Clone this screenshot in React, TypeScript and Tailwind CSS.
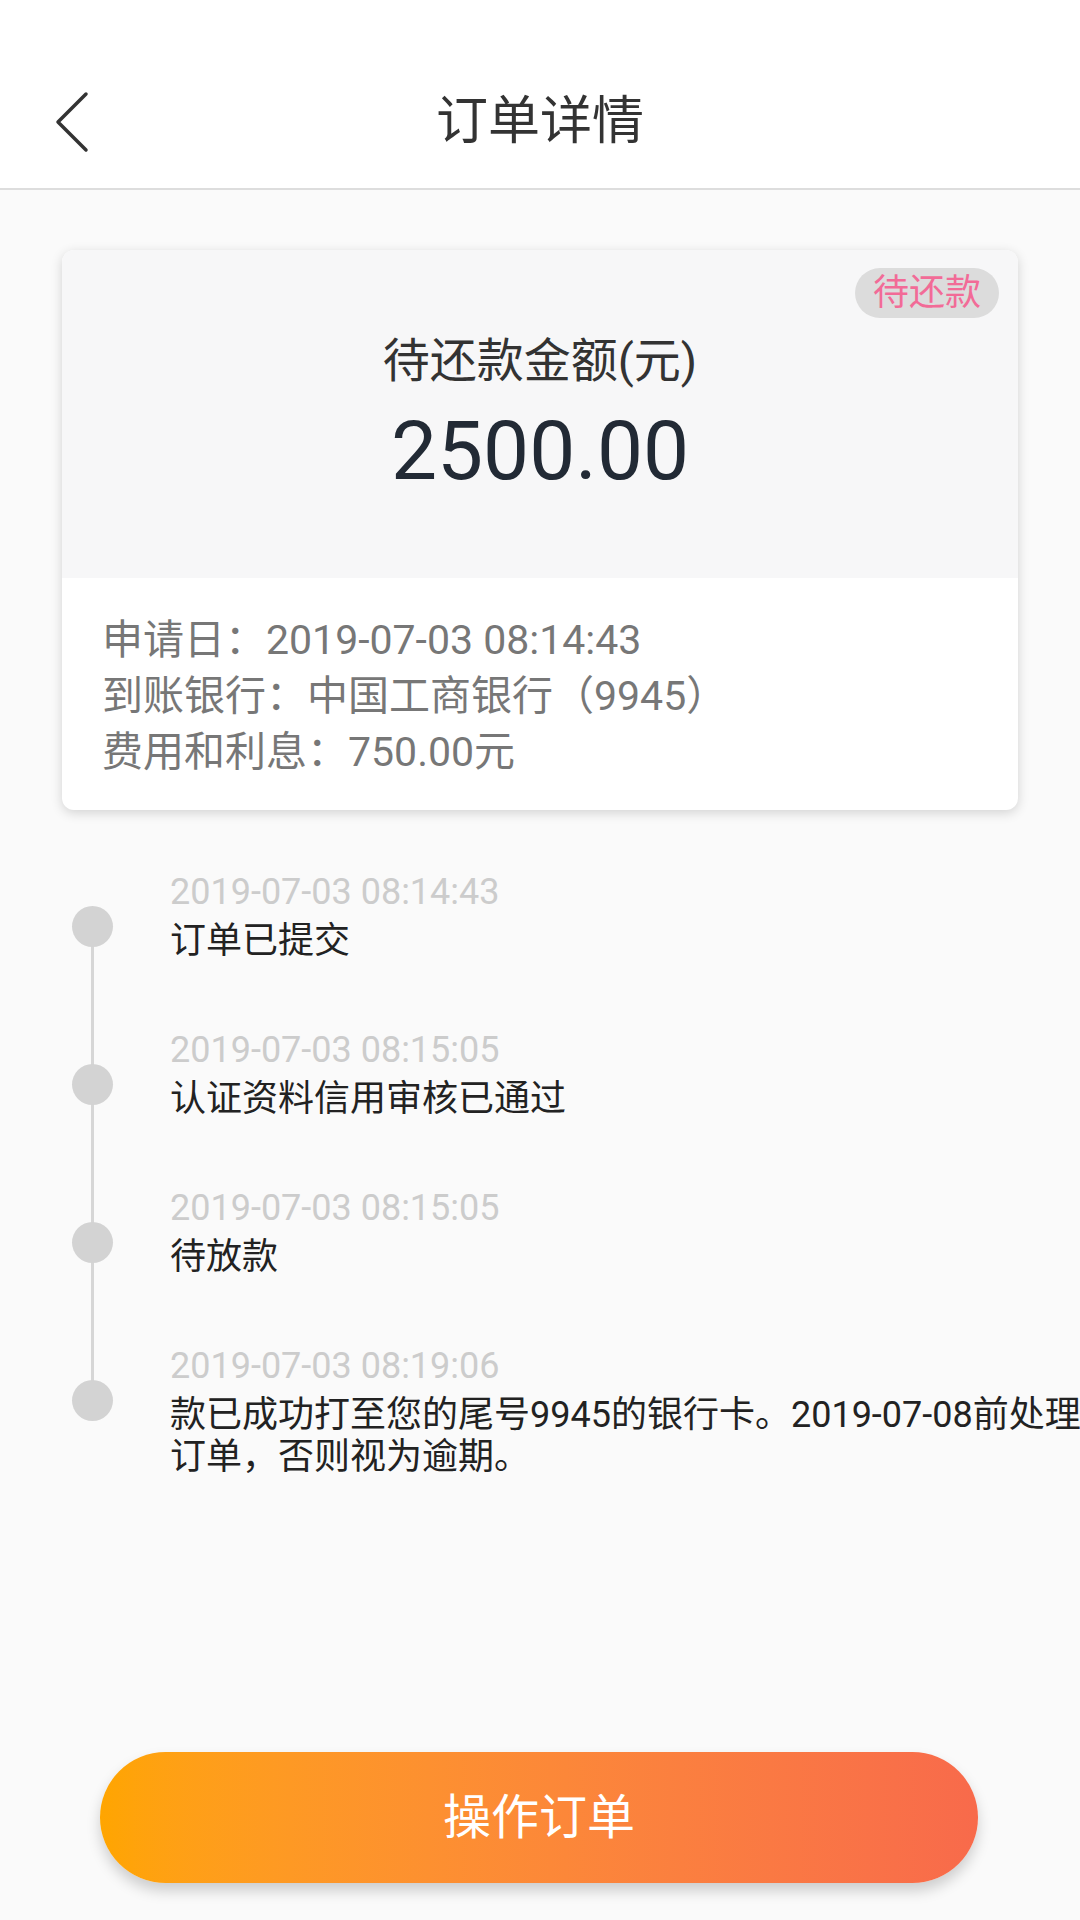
const FONT = "font-['Roboto','Noto_Sans_CJK_SC',sans-serif]"

type Step = { time: string; lines: string[] }

const steps: Step[] = [
  { time: '2019-07-03 08:14:43', lines: ['订单已提交'] },
  { time: '2019-07-03 08:15:05', lines: ['认证资料信用审核已通过'] },
  { time: '2019-07-03 08:15:05', lines: ['待放款'] },
  {
    time: '2019-07-03 08:19:06',
    lines: ['款已成功打至您的尾号9945的银行卡。2019-07-08前处理', '订单，否则视为逾期。'],
  },
]

function BackIcon() {
  return (
    <svg width="40" height="64" viewBox="0 0 40 64" fill="none">
      <path d="M34 4 L6 32 L34 60" stroke="#333" strokeWidth="3.5" strokeLinecap="round" strokeLinejoin="round" />
    </svg>
  )
}

export default function App() {
  return (
    <div className={`${FONT} min-h-[1920px] w-[1080px] bg-[#fafafa] flex flex-col`}>
      {/* header */}
      <header className="bg-white border-b-2 border-[#dddddd] pt-[66px] pb-[10px]">
        <div className="relative h-[112px] flex items-center justify-center">
          <button type="button" className="absolute left-[52px] top-[24px]">
            <BackIcon />
          </button>
          <h1 className="text-[52px] leading-none text-[#333333]">订单详情</h1>
        </div>
      </header>

      <main className="flex-1 flex flex-col">
        {/* summary card */}
        <section className="mx-[62px] mt-[60px] rounded-[12px] bg-white shadow-[0_3px_12px_rgba(0,0,0,0.16)] overflow-hidden">
          <div className="relative bg-[#f7f7f8] pt-[81px] pb-[86px] flex flex-col items-center">
            <span className="absolute top-[18px] right-[19px] h-[50px] px-[18px] rounded-full bg-[#dcdcdc] text-[#f26b97] text-[36px] leading-[50px]">
              待还款
            </span>
            <div className="text-[47px] leading-[60px] text-[#333333]">待还款金额(元)</div>
            <div className="mt-[19px] text-[82px] leading-none text-[#222a35]">2500.00</div>
          </div>
          <div className="pt-[34px] pb-[30px] pl-[40px] text-[41px] leading-[56px] text-[#777777]">
            <div>申请日：2019-07-03 08:14:43</div>
            <div>到账银行：中国工商银行（9945）</div>
            <div>费用和利息：750.00元</div>
          </div>
        </section>

        {/* timeline */}
        <section className="relative mt-[61px] flex flex-col gap-[67px]">
          <div className="absolute left-[91px] top-[55px] h-[475px] w-[3px] bg-[#d6d6d6]" />
          {steps.map((s, i) => (
            <div key={i} className="relative flex">
              <div className="w-[170px] shrink-0 pl-[72px] pt-[35px]">
                <div className="w-[41px] h-[41px] rounded-full bg-[#d3d3d3]" />
              </div>
              <div className="flex flex-col gap-[7px]">
                <div className="text-[36px] leading-[42px] text-[#cccccc] whitespace-nowrap">{s.time}</div>
                <div className="text-[36px] leading-[42px] text-[#222222]">
                  {s.lines.map((l, j) => (
                    <div key={j} className="whitespace-nowrap">{l}</div>
                  ))}
                </div>
              </div>
            </div>
          ))}
        </section>
      </main>

      {/* action */}
      <div className="px-[100px] pb-[37px]">
        <button
          type="button"
          className="w-[878px] h-[131px] rounded-full bg-gradient-to-r from-[#ffa500] to-[#f86a4b] text-white text-[48px] shadow-[0_8px_14px_rgba(0,0,0,0.18)]"
        >
          操作订单
        </button>
      </div>
    </div>
  )
}
